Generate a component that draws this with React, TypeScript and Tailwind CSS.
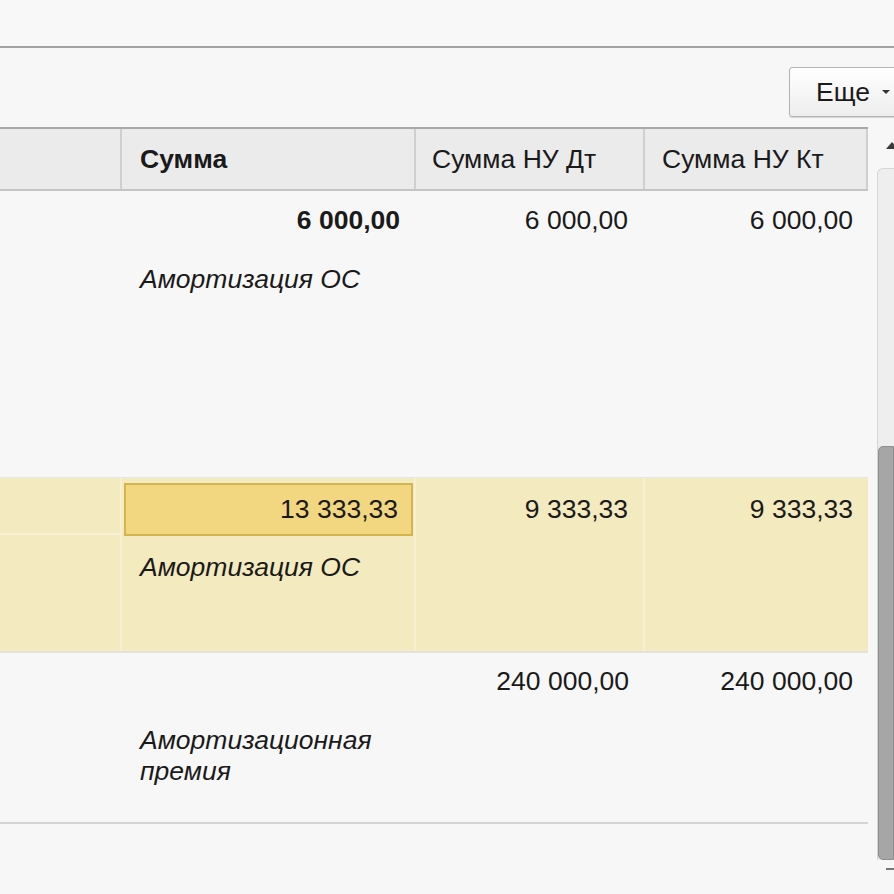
import React from "react";

const font = { fontFamily: '"Liberation Sans", Arial, sans-serif' };

export default function App() {
  return (
    <div
      className="w-[894px] h-[894px] bg-[#f7f7f7] overflow-hidden text-[#1a1a1a] text-[26.5px] leading-none"
      style={font}
    >
      {/* top area */}
      <div className="h-[48px] border-b-2 border-[#a2a2a2] bg-[#f8f8f8]" />
      {/* toolbar */}
      <div className="h-[79px] flex justify-end items-start pt-[19px]">
        <button className="h-[50px] w-[110px] -mr-[5px] flex items-center gap-[12px] pl-[26px] border border-[#b4b4b4] rounded-[3px] bg-gradient-to-b from-[#ffffff] to-[#ededed] shadow-[0_1px_1px_rgba(0,0,0,0.15)]">
          <span>Еще</span>
          <span className="w-0 h-0 border-l-[4px] border-r-[4px] border-t-[4px] border-l-transparent border-r-transparent border-t-[#333]" />
        </button>
      </div>
      {/* table + scrollbar */}
      <div className="flex">
        <div className="w-[868px]">
          {/* header */}
          <div className="grid grid-cols-[122px_294px_229px_223px] h-[64px] border-t-2 border-b-2 border-t-[#a8a8a8] border-b-[#c4c4c4] bg-[#ebebeb]">
            <div className="border-r-2 border-[#cfcfcf]" />
            <div className="flex items-center pl-[18px] font-bold border-r-2 border-[#cfcfcf]">Сумма</div>
            <div className="flex items-center pl-[16px] border-r-2 border-[#cfcfcf]">Сумма НУ Дт</div>
            <div className="flex items-center pl-[17px] border-r-2 border-[#cfcfcf]">Сумма НУ Кт</div>
          </div>
          {/* row 1 */}
          <div className="grid grid-cols-[122px_294px_229px_223px] h-[287px] border-b border-[#e6e6e6]">
            <div />
            <div className="flex flex-col pt-[16px]">
              <div className="text-right pr-[16px] font-bold h-[22px]">6 000,00</div>
              <div className="italic pl-[18px] mt-[37px]">Амортизация ОС</div>
            </div>
            <div className="text-right pr-[17px] pt-[16px]">6 000,00</div>
            <div className="text-right pr-[15px] pt-[16px]">6 000,00</div>
          </div>
          {/* row 2 selected */}
          <div className="grid grid-cols-[122px_294px_229px_223px] h-[175px] bg-[#f4eabf] border-b-2 border-[#e4e2da]">
            <div className="border-r-2 border-[#f7efcf] flex flex-col">
              <div className="h-[57px] border-b-2 border-[#f8f1d6]" />
            </div>
            <div className="border-r-2 border-[#f7efcf] flex flex-col pt-[5px] pl-[2px] pr-[1px]">
              <div className="h-[53px] bg-[#f2d780] border-2 border-[#d3b550] flex items-center justify-end pr-[13px]">
                13 333,33
              </div>
              <div className="italic pl-[16px] mt-[18px]">Амортизация ОС</div>
            </div>
            <div className="border-r-2 border-[#f7efcf] text-right pr-[15px] pt-[18px]">9 333,33</div>
            <div className="text-right pr-[15px] pt-[18px]">9 333,33</div>
          </div>
          {/* row 3 */}
          <div className="grid grid-cols-[122px_294px_229px_223px] h-[171px] border-b-2 border-[#d4d4d4]">
            <div />
            <div className="flex flex-col pt-[72px] pl-[18px] italic leading-[31px]">
              <div>Амортизационная</div>
              <div>премия</div>
            </div>
            <div className="text-right pr-[16px] pt-[15px]">240 000,00</div>
            <div className="text-right pr-[15px] pt-[15px]">240 000,00</div>
          </div>
        </div>
        {/* scrollbar */}
        <div className="w-[26px] flex flex-col pl-[9px] pt-[15px]">
          <div className="h-[14px] flex justify-end">
            <svg width="12" height="8" viewBox="0 0 12 8" className="-mr-[4px]">
              <polygon points="6,0 12,7 0,7" fill="#3a3a3a" />
            </svg>
          </div>
          <div className="mt-[12px] h-[692px] bg-[#eeeeee] border-l border-t border-[#d6d6d6] rounded-tl-[6px] flex flex-col justify-end">
            <div className="h-[414px] bg-[#a6a6a6] rounded-l-[5px] border border-[#8f8f8f]" />
          </div>
          <div className="mt-[8px] h-[6px] flex justify-end">
            <div className="w-[8px] h-[2px] bg-[#777]" />
          </div>
        </div>
      </div>
    </div>
  );
}
